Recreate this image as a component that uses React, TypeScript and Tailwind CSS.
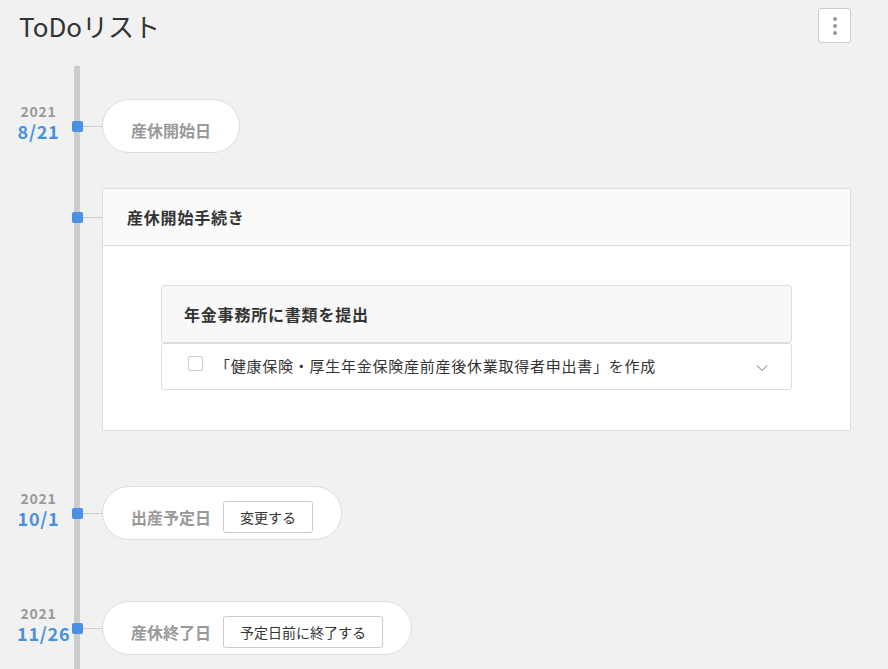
import React from "react";

const FONT = "font-['Noto_Sans_CJK_JP','Noto_Sans',sans-serif]";

function Marker() {
  return (
    <div className="flex w-[42px] shrink-0 items-center pl-[12px]">
      <div className="relative z-10 h-[11px] w-[11px] rounded-[2px] bg-[#4a90e2]" />
      <div className="h-px flex-1 bg-[#cccccc]" />
    </div>
  );
}

function DateLabel({ year, day }: { year?: string; day?: string }) {
  return (
    <div className="flex w-[43px] shrink-0 flex-col pb-2 text-center font-bold tracking-[0.05em]">
      {year && <span className="text-[14px] leading-[18px] text-[#999999]">{year}</span>}
      {day && <span className="text-[18px] leading-[22px] text-[#4a90e2]">{day}</span>}
    </div>
  );
}

function MilestoneRow({
  year,
  day,
  label,
  action,
}: {
  year: string;
  day: string;
  label: string;
  action?: string;
}) {
  return (
    <div className="flex items-center">
      <DateLabel year={year} day={day} />
      <Marker />
      <div className="flex h-[54px] items-center gap-3 rounded-full border border-[#dddddd] bg-white px-7 pt-2">
        <span className="text-[16px] font-bold text-[#999999]">{label}</span>
        {action && (
          <button className="h-8 rounded-[3px] border border-[#cccccc] bg-white px-4 text-[14px] text-[#333333]">
            {action}
          </button>
        )}
      </div>
    </div>
  );
}

export default function App() {
  return (
    <div className={`${FONT} min-h-screen bg-[#f1f1f1] pr-[37px] pl-[17px]`}>
      <header className="flex items-center justify-between pt-2">
        <h1 className="pl-[2px] text-[26px] leading-[34px] text-[#333333]">ToDoリスト</h1>
        <button className="flex h-[35px] w-[33px] flex-col items-center justify-center gap-[3px] rounded-[3px] border border-[#cccccc] bg-white">
          <span className="h-[4px] w-[4px] rounded-full bg-[#999999]" />
          <span className="h-[4px] w-[4px] rounded-full bg-[#999999]" />
          <span className="h-[4px] w-[4px] rounded-full bg-[#999999]" />
        </button>
      </header>

      <div className="relative mt-[23px] pt-[33px] pb-10">
        <div className="absolute top-0 bottom-0 left-[57px] w-[6px] bg-[#cccccc]" />

        <MilestoneRow year="2021" day="8/21" label="産休開始日" />

        <div className="mt-[35px] flex items-start">
          <DateLabel />
          <div className="flex h-[58px] items-center">
            <Marker />
          </div>
          <div className="flex-1 border border-[#dddddd] bg-white">
            <div className="flex h-[57px] items-center border-b border-[#dddddd] bg-[#fafafa] px-6 text-[16px] font-bold tracking-[0.05em] text-[#333333]">
              産休開始手続き
            </div>
            <div className="px-[58px] pt-[39px] pb-10">
              <div className="flex h-[58px] items-center rounded-[3px] border border-[#dddddd] bg-[#f8f8f8] px-[22px] text-[16px] font-bold tracking-[0.05em] text-[#333333]">
                年金事務所に書類を提出
              </div>
              <div className="flex h-[47px] items-center gap-[12px] rounded-[3px] border border-[#dddddd] bg-white pr-[23px] pl-[26px]">
                <span className="mb-[6px] h-[15px] w-[15px] shrink-0 rounded-[2px] border border-[#cccccc] bg-white" />
                <span className="flex-1 text-[15px] tracking-[0.05em] text-[#333333]">
                  「健康保険・厚生年金保険産前産後休業取得者申出書」を作成
                </span>
                <svg width="12" height="8" viewBox="0 0 12 8" fill="none" className="mt-[2px]">
                  <path d="M1 1.5 6 6.5 11 1.5" stroke="#aaaaaa" strokeWidth="1.2" />
                </svg>
              </div>
            </div>
          </div>
        </div>

        <div className="mt-[55px]">
          <MilestoneRow year="2021" day="10/1" label="出産予定日" action="変更する" />
        </div>
        <div className="mt-[61px]">
          <MilestoneRow year="2021" day="11/26" label="産休終了日" action="予定日前に終了する" />
        </div>
      </div>
    </div>
  );
}
